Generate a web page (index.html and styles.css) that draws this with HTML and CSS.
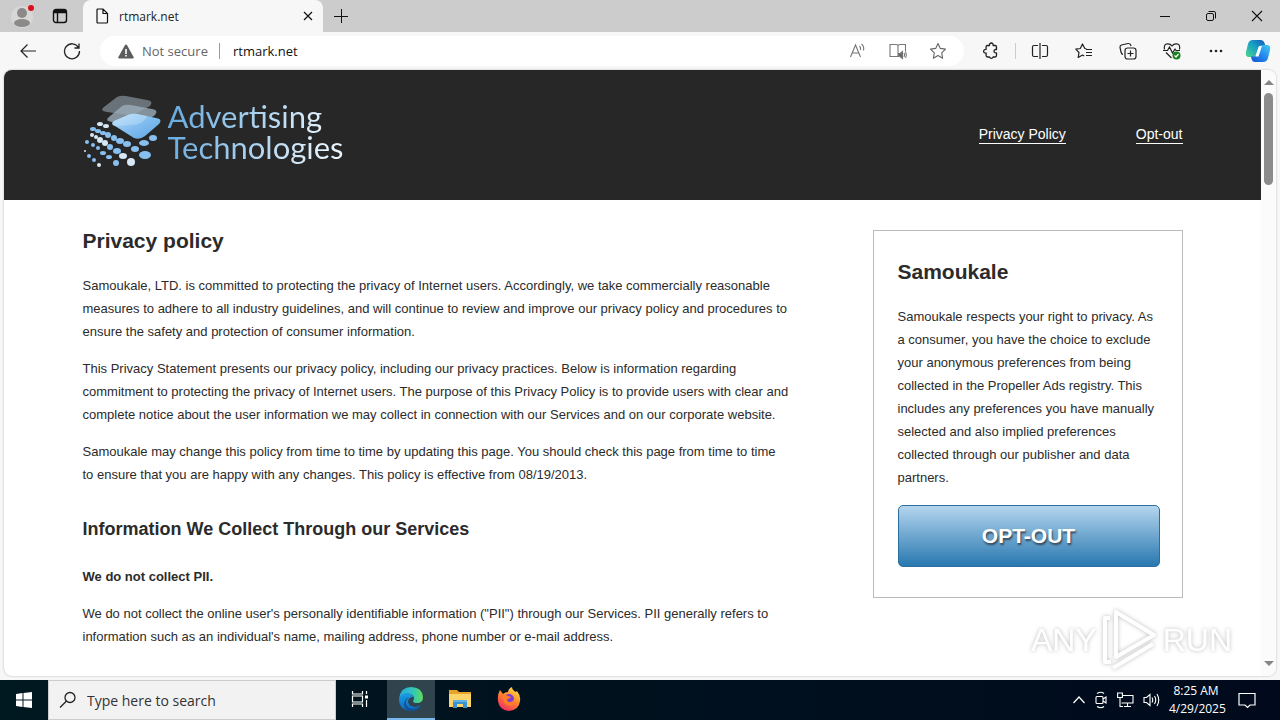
FILE: index.html
```html
<!DOCTYPE html>
<html lang="en">
<head>
    <meta charset="UTF-8"/>
    <title>rtmark.net</title>
    <meta name="viewport" content="width=device-width, initial-scale=1"/>
    <link rel="stylesheet" href="styles.css">
</head>
<body>
<div class="tabs">
    <button class="profile" aria-label="Profile">
        <svg width="24" height="24" viewBox="0 0 24 24"><circle cx="11" cy="13" r="11" fill="#d9d7d5"/><circle cx="11" cy="9" r="5" fill="#8c8a88"/><ellipse cx="11" cy="19" rx="8" ry="4" fill="#8c8a88"/><circle cx="20" cy="4" r="3" fill="#d8101c"/></svg>
    </button>
    <button class="tab-menu" aria-label="Tab actions">
        <svg width="16" height="16" viewBox="0 0 16 16" fill="none" stroke="#111" stroke-width="1.4"><rect x="1.5" y="1.5" width="13" height="13" rx="2.5"/><path d="M2 3h12M2 4.3h12" stroke-width="2"/><path d="M5.5 5v9.5"/></svg>
    </button>
    <div class="tab">
        <svg width="14" height="16" viewBox="0 0 14 16" fill="none" stroke="#111" stroke-width="1.2"><path d="M3 1h5l4.5 4.5V14q0 1-1 1H3q-1 0-1-1V2q0-1 1-1zM8 1v4.500h4.500"/></svg>
        <span class="tab-title">rtmark.net</span>
        <button aria-label="Close tab"><svg width="10" height="10" viewBox="0 0 10 10" stroke="#111" stroke-width="1.2"><path d="M1 1l8 8M9 1L1 9"/></svg></button>
    </div>
    <button class="new-tab" aria-label="New tab"><svg width="14" height="14" viewBox="0 0 14 14" stroke="#111"><path d="M7.500 0v14M0 7.500h14"/></svg></button>
    <div class="window-buttons">
        <button aria-label="Minimize"><svg width="12" height="12" viewBox="0 0 12 12" stroke="#111"><path d="M1 6.500h10"/></svg></button>
        <button aria-label="Restore"><svg width="12" height="12" viewBox="0 0 12 12" fill="none" stroke="#111"><rect x="1.500" y="3.500" width="7" height="7" rx="1.500"/><path d="M3.500 1.500H9q1.500 0 1.500 1.500v5.500"/></svg></button>
        <button aria-label="Close"><svg width="12" height="12" viewBox="0 0 12 12" stroke="#111" stroke-width="1.1"><path d="M1 1l10 10M11 1L1 11"/></svg></button>
    </div>
</div>

<div class="toolbar">
    <button aria-label="Back"><svg width="18" height="16" viewBox="0 0 18 16" fill="none" stroke="#222" stroke-width="1.2"><path d="M17 8H2M8.500 1.500L2 8l6.500 6.500"/></svg></button>
    <button class="reload" aria-label="Reload"><svg width="18" height="18" viewBox="0 0 18 18" fill="none" stroke="#222" stroke-width="1.3"><path d="M15.500 5.500A7.500 7.500 0 1 0 16.500 9M16 1.500v4.500h-4.500"/></svg></button>
    <div class="address">
        <svg width="16" height="15" viewBox="0 0 16 15"><path d="M8 .5q.7 0 1.100.8l6.500 11.600q.7 1.600-1 1.600H1.400q-1.700 0-1-1.600L6.900 1.300Q7.300.5 8 .5z" fill="#5c5c5c"/><path d="M7.200 5h1.600v5H7.200zM7.200 11h1.600v1.600H7.200z" fill="#fff"/></svg>
        <label for="url">Not secure</label>
        <input type="text" id="url" value="rtmark.net" spellcheck="false"/>
        <button aria-label="Read aloud"><svg width="18" height="18" viewBox="0 0 18 18" fill="none" stroke="#777" stroke-width="1.100"><path d="M1.500 15L6.500 3l5 12M3.300 11h6.500M10.500 4q1.500 1.500 1 4M12.500 2q3 2.500 2 6.500"/></svg></button>
        <button aria-label="Immersive reader"><svg width="18" height="18" viewBox="0 0 18 18" fill="none" stroke="#777" stroke-width="1.100"><path d="M9 14.500H1V2.500h6q2 0 2 1.500v10.500M9 4q0-1.500 2-1.500h5.500v7"/><path d="M9.500 11.500h1.500l2.500-2v7l-2.500-2H9.500z" fill="#666"/><path d="M15 11q1 2 0 4M16.500 10q1.500 3 0 6"/></svg></button>
        <button aria-label="Favorite"><svg width="18" height="18" viewBox="0 0 18 18" fill="none" stroke="#666" stroke-width="1.100" stroke-linejoin="round"><path d="M9 1.500l2.300 4.900 5.200.7-3.800 3.700.9 5.400L9 13.600l-4.600 2.600.9-5.400L1.500 7.100l5.200-.7z"/></svg></button>
    </div>
    <div class="tools">
        <button aria-label="Extensions"><svg width="18" height="18" viewBox="0 0 18 18" fill="none" stroke="#222" stroke-width="1.300" stroke-linejoin="round"><path d="M5.500 3.500h2a1.900 1.900 0 1 1 3.600 0h2q1.400 0 1.400 1.400v2.600h-.8a1.700 1.700 0 1 0 0 3.400h.8v2.700q0 1.400-1.400 1.400h-2a1.900 1.900 0 0 1-3.600 0h-2q-1.400 0-1.400-1.400V11a1.900 1.900 0 1 1 0-3.600V4.900q0-1.400 1.400-1.400z"/></svg></button>
        <span class="tools-line"></span>
        <button aria-label="Split screen"><svg width="18" height="18" viewBox="0 0 18 18" fill="none" stroke="#222" stroke-width="1.200"><path d="M7 3.500H3Q1.500 3.500 1.500 5v8q0 1.500 1.500 1.500h4M11 3.500h4q1.500 0 1.500 1.500v8q0 1.500-1.500 1.500h-4M9 1v16"/></svg></button>
        <button aria-label="Favorites"><svg width="18" height="18" viewBox="0 0 18 18" fill="none" stroke="#222" stroke-width="1.200" stroke-linejoin="round"><path d="M11.500 6.800L9.800 6.500 7.500 2 5.300 6.500l-4.500.7 3.200 3.300-.8 5 4.300-2.400 1.700 1M11 7.500h6M11 10.500h6M11 13.500h6"/></svg></button>
        <button aria-label="Collections"><svg width="18" height="18" viewBox="0 0 18 18" fill="none" stroke="#222" stroke-width="1.200"><rect x="6" y="6" width="11" height="11" rx="2.500"/><path d="M11.500 8.500v6M8.500 11.500h6M4 12.500Q2.500 12 2 10L1 5.500Q.8 3.500 2.500 3L9 1.500q2-.2 2.700 1.500l.3 1"/></svg></button>
        <button aria-label="Browser essentials"><svg width="18" height="18" viewBox="0 0 18 18" fill="none" stroke="#222" stroke-width="1.200"><path d="M1.500 7.500Q.5 2 4.500 1.800 7.500 1.700 9 4q1.500-2.300 4.500-2.200 4 .2 3 5.700M3 10.500l5.500 5.500M0 8.500h4.500L6.500 5l3 6L12 7l1 1.500h4"/><circle cx="13.500" cy="13.500" r="4" fill="#18811c" stroke="none"/><path d="M11.500 13.500l1.500 1.500 2.500-3" stroke="#fff"/></svg></button>
        <button aria-label="Settings and more"><svg width="18" height="18" viewBox="0 0 18 18" fill="#222"><circle cx="4" cy="9" r="1.300"/><circle cx="9" cy="9" r="1.300"/><circle cx="14" cy="9" r="1.300"/></svg></button>
    </div>
    <button class="copilot" aria-label="Copilot">
        <svg width="26" height="24" viewBox="0 0 26 24">
            <defs>
                <linearGradient id="cp1" x1="0" y1="1" x2="1" y2="0"><stop offset="0" stop-color="#4dd68b"/><stop offset=".55" stop-color="#169fc5"/><stop offset="1" stop-color="#1555b8"/></linearGradient>
                <linearGradient id="cp2" x1="0" y1="1" x2="1" y2="0"><stop offset="0" stop-color="#1550cf"/><stop offset=".5" stop-color="#2389ed"/><stop offset="1" stop-color="#43cdf0"/></linearGradient>
            </defs>
            <path d="M8 1h8q2.500 0 3.300 2.500L20.500 7H16q-2 0-2.700 2L11 16q-.7 2-3 2H4q-4 0-3-5l2-8q1-4 5-4z" fill="url(#cp1)"/>
            <path d="M18 23h-8q-2.500 0-3.300-2.500L6 17.500h3q2 0 2.700-2L14.500 8q.7-2 3-2h4.500q4 0 3 5l-2 8q-1 4-5 4z" fill="url(#cp2)"/>
            <path d="M14 7h3l-3.500 10.500h-3z" fill="#fff"/>
        </svg>
    </button>
</div>

<div class="viewport">
    <div class="page">
        <header class="header">
            <div class="container header-inner">
                <a class="logo" href="#">
                    <svg width="78" height="76" viewBox="0 0 78 76">
                        <defs>
                            <linearGradient id="tile" x1="0" y1="0" x2="1" y2="1"><stop offset="0" stop-color="#c2e2fa"/><stop offset=".5" stop-color="#82bdef"/><stop offset="1" stop-color="#5ba5e2"/></linearGradient>
                        </defs>
                        <path d="M34 4q4-2 9-1l21 4q7 1 3 6L54 20q-4 3-9 2l-21-3q-8-1-3-5z" fill="#697179"/>
                        <path d="M39 13q4-2 9-1l21 4q7 1 3 6L59 31q-4 3-9 2l-21-4q-8-1-3-5z" fill="#9aadb9" opacity=".8"/>
                        <path d="M45 22q4-2 9-1l19 4q7 1 3 6L62 43q-5 4-11 2L32 33q-5-2-1-5z" fill="url(#tile)"/>
                        <path d="M31 28l14-6q4-2 9-1l10 2q-3 9-17 9-10 1-16 1-4-2 0-5z" fill="#c6e3fb" opacity=".4"/>
                        <g fill="#d6e7f5">
                            <ellipse cx="17" cy="31" rx="3" ry="2"/><ellipse cx="23" cy="33" rx="3" ry="2"/><ellipse cx="9" cy="42" rx="2" ry="2"/><ellipse cx="13" cy="44" rx="2" ry="2"/><ellipse cx="17" cy="47" rx="3" ry="3"/><ellipse cx="22" cy="50" rx="3" ry="3"/><ellipse cx="40" cy="63" rx="4" ry="3"/><ellipse cx="48" cy="69" rx="4" ry="4"/><ellipse cx="16" cy="72" rx="2" ry="2"/><ellipse cx="2" cy="58" rx="1" ry="1"/>
                        </g>
                        <g fill="#86bff0">
                            <ellipse cx="10" cy="36" rx="3" ry="2"/><ellipse cx="15" cy="38" rx="3" ry="2"/><ellipse cx="20" cy="40" rx="3" ry="2"/><ellipse cx="25" cy="42" rx="3" ry="3"/><ellipse cx="31" cy="45" rx="3" ry="3"/><ellipse cx="37" cy="48" rx="4" ry="3"/><ellipse cx="44" cy="51" rx="4" ry="3"/><ellipse cx="52" cy="56" rx="4" ry="3"/><ellipse cx="61" cy="50" rx="5" ry="3"/><ellipse cx="70" cy="45" rx="4" ry="3"/><ellipse cx="62" cy="62" rx="6" ry="4"/><ellipse cx="27" cy="54" rx="3" ry="3"/><ellipse cx="34" cy="58" rx="4" ry="3"/><ellipse cx="4" cy="49" rx="2" ry="2"/><ellipse cx="10" cy="52" rx="2" ry="2"/><ellipse cx="15" cy="55" rx="2" ry="2"/><ellipse cx="20" cy="60" rx="3" ry="2"/><ellipse cx="26" cy="64" rx="3" ry="2"/><ellipse cx="6" cy="63" rx="2" ry="2"/><ellipse cx="11" cy="67" rx="2" ry="2"/><ellipse cx="33" cy="70" rx="3" ry="3"/>
                        </g>
                    </svg>
                    <span class="logo-text">Advertising<br/>Technologies</span>
                </a>
                <nav class="menu">
                    <a href="#">Privacy Policy</a>
                    <a href="#">Opt-out</a>
                </nav>
            </div>
        </header>

        <div class="container content">
            <main class="main">
                <h1>Privacy policy</h1>
                <p>Samoukale, LTD. is committed to protecting the privacy of Internet users. Accordingly, we take commercially reasonable measures to adhere to all industry guidelines, and will continue to review and improve our privacy policy and procedures to ensure the safety and protection of consumer information.</p>
                <p>This Privacy Statement presents our privacy policy, including our privacy practices. Below is information regarding commitment to protecting the privacy of Internet users. The purpose of this Privacy Policy is to provide users with clear and complete notice about the user information we may collect in connection with our Services and on our corporate website.</p>
                <p>Samoukale may change this policy from time to time by updating this page. You should check this page from time to time<br/>to ensure that you are happy with any changes. This policy is effective from 08/19/2013.</p>
                <h2>Information We Collect Through our Services</h2>
                <p><b>We do not collect PII.</b></p>
                <p>We do not collect the online user's personally identifiable information ("PII") through our Services. PII generally refers to information such as an individual's name, mailing address, phone number or e-mail address.</p>
            </main>
            <aside class="sidebar">
                <h1>Samoukale</h1>
                <p>Samoukale respects your right to privacy. As a consumer, you have the choice to exclude your anonymous preferences from being collected in the Propeller Ads registry. This includes any preferences you have manually selected and also implied preferences collected through our publisher and data partners.</p>
                <button class="opt-out">OPT-OUT</button>
            </aside>
        </div>
    </div>
    <div class="scrollbar">
        <span class="arrow-up"></span>
        <span class="thumb"></span>
        <span class="arrow-down"></span>
    </div>
    <div class="watermark">
        <span>ANY</span>
        <svg width="58" height="64" viewBox="0 0 58 64" fill="none" stroke="#fff" stroke-width="4" stroke-linejoin="round"><path d="M15 4l38 23-38 22zM9 10H4v44h6M12 60l40-24"/></svg>
        <span>RUN</span>
    </div>
</div>

<div class="taskbar">
    <button class="start" aria-label="Start"><svg width="16" height="16" viewBox="0 0 16 16" fill="#fff"><path d="M0 2l6.500-1v6.500H0zM7.500 1L16 0v7.500H7.500zM0 8.500h6.500V15L0 14zM7.500 8.500H16V16l-8.500-1z"/></svg></button>
    <div class="search">
        <label for="search"><svg width="18" height="18" viewBox="0 0 18 18" fill="none" stroke="#222" stroke-width="1.300"><circle cx="11" cy="6.500" r="5"/><path d="M7.500 10L1 16.500"/></svg></label>
        <input type="text" id="search" aria-label="Search" placeholder="Type here to search"/>
    </div>
    <button class="app task-view" aria-label="Task view"><svg width="18" height="18" viewBox="0 0 18 18" fill="none" stroke="#fff" stroke-width="1.200"><path d="M1.500 1v3h10V1M1.500 17v-3h10v3M1.500 6h10v6h-10zM15.500 1v3M15.500 10v7"/><path d="M14 5.500h3v3h-3z" fill="#fff" stroke="none"/></svg></button>
    <button class="app active" aria-label="Edge">
        <svg width="24" height="24" viewBox="0 0 24 24">
            <defs>
                <linearGradient id="edge1" x1="0" y1="0" x2="1" y2="0"><stop offset="0" stop-color="#29a9e0"/><stop offset=".6" stop-color="#32c7b6"/><stop offset="1" stop-color="#63dc5a"/></linearGradient>
                <linearGradient id="edge2" x1="0" y1="0" x2="0" y2="1"><stop offset="0" stop-color="#1b9de2"/><stop offset="1" stop-color="#0d6abf"/></linearGradient>
            </defs>
            <path d="M0 11Q2 0 12 0q11 0 12 10 0 6-6 6-4 0-4-2 1-1 1-3-1-4-5-4-5 0-10 4z" fill="url(#edge1)"/>
            <path d="M0 12q2-6 8-6 5 0 6 4-4 0-5 4 0 5 6 6 4 0 7-2-4 6-10 6Q0 23 0 12z" fill="url(#edge2)"/>
            <path d="M10 10q-5 4-2 9 5 6 14-1-4 6-10 6-6 0-7-6 0-6 5-8z" fill="#12529c"/>
        </svg>
    </button>
    <button class="app" aria-label="File Explorer"><svg width="22" height="20" viewBox="0 0 22 20"><path d="M0 1h8l2 2h12v15H0z" fill="#e8a32b"/><path d="M0 5h22v13H0z" fill="#fbd569"/><path d="M4 11h14v8h-4v-4H8v4H4z" fill="#3a93d0"/><path d="M4 11h14v2H4z" fill="#62b2e4"/></svg></button>
    <button class="app" aria-label="Firefox">
        <svg width="24" height="24" viewBox="0 0 24 24">
            <defs>
                <linearGradient id="fox" x1=".8" y1="0" x2=".2" y2="1"><stop offset="0" stop-color="#ffe14a"/><stop offset=".45" stop-color="#ff8a2a"/><stop offset="1" stop-color="#f02466"/></linearGradient>
            </defs>
            <path d="M3 3l3 4q2-2 5-2 0-3 4-5 0 3 4 5l1-1q4 5 3 10-1 9-11 10Q2 23 1 14q-1-6 2-11z" fill="url(#fox)"/>
            <circle cx="12" cy="12" r="5" fill="#7a3fd0"/>
            <path d="M5 8q3-1 6 1l3 1q-1 2-4 2 0 3 3 3 3 0 4-3 1 7-5 7Q6 18 5 8z" fill="#ff7c2c"/>
        </svg>
    </button>
    <div class="tray">
        <button aria-label="Show hidden icons"><svg width="12" height="16" viewBox="0 0 12 16" fill="none" stroke="#fff" stroke-width="1.200"><path d="M.5 11L6 5l5.500 6"/></svg></button>
        <button aria-label="Meet now"><svg width="14" height="18" viewBox="0 0 14 18" fill="none" stroke="#fff" stroke-width="1.100"><rect x="2" y="5.500" width="7" height="7" rx="1"/><path d="M9 8l3-2v6l-3-2M3 2.500q4-2.500 7 0M3 15.500q4 2.500 7 0"/></svg></button>
        <button aria-label="Network"><svg width="17" height="16" viewBox="0 0 17 16" fill="none" stroke="#fff" stroke-width="1.100"><path d="M6 3.500h10v7.500H4.500M10.500 11v3M7 14.500h7M3 6v8.500h3"/><path d="M.6 1h4.800v4.500H.6z"/></svg></button>
        <button aria-label="Volume"><svg width="17" height="16" viewBox="0 0 17 16" fill="none" stroke="#fff" stroke-width="1.100"><path d="M1 5.500h2.500L7 2.500v11l-3.500-3H1zM9 5.500q1.500 2.500 0 5M11.500 4q2.500 4 0 8M14 2q3.500 6 0 12"/></svg></button>
        <div class="clock">8:25 AM<br/>4/29/2025</div>
        <button class="notifications" aria-label="Notifications"><svg width="18" height="18" viewBox="0 0 18 18" fill="none" stroke="#fff" stroke-width="1.200"><path d="M1 2.500h16v11.500h-5l-2.500 2.500L7 14H1z"/></svg></button>
    </div>
</div>
</body>
</html>
```
FILE: styles.css
```css
* {
    box-sizing: border-box;
}

body {
    margin: 0;
    height: 100vh;
    display: flex;
    flex-direction: column;
    overflow: hidden;
    background: #f7f7f7;
    font-family: "Open Sans", "Noto Sans", sans-serif;
    font-size: 14px;
    color: #222;
}

button {
    display: flex;
    align-items: center;
    justify-content: center;
    padding: 0;
    border: none;
    background: none;
    font-family: inherit;
    flex-shrink: 0;
    cursor: pointer;
}

svg {
    display: block;
    flex-shrink: 0;
}

/* Browser */
.tabs {
    display: flex;
    height: 32px;
    flex-shrink: 0;
    background: #ccc;
}

.profile {
    width: 46px;
}

.tab-menu {
    width: 28px;
}

.tab {
    display: flex;
    align-items: center;
    gap: 10px;
    width: 240px;
    margin-left: 9px;
    padding: 0 10px 0 12px;
    background: #f7f7f7;
    border-radius: 8px 8px 0 0;
    font-size: 12px;
}

.tab-title {
    flex: 1;
}

.new-tab {
    width: 36px;
}

.window-buttons {
    display: flex;
    margin-left: auto;
}

.window-buttons button {
    width: 46px;
}

.toolbar {
    display: flex;
    align-items: center;
    height: 38px;
    flex-shrink: 0;
    padding: 0 9px 0 19px;
}

.reload {
    margin-left: 26px;
}

.address {
    display: flex;
    align-items: center;
    flex: 1;
    height: 30px;
    margin-left: 19px;
    padding: 0 17px 0 18px;
    background: #fff;
    border-radius: 15px;
    gap: 22px;
    font-size: 13px;
}

.address label {
    margin-left: -14px;
    padding-right: 11px;
    border-right: 1px solid #999;
    line-height: 16px;
    color: #666;
}

.address input {
    flex: 1;
    min-width: 0;
    margin-left: -9px;
    padding: 0;
    border: none;
    outline: none;
    font: inherit;
    color: #111;
}

.tools {
    display: flex;
    align-items: center;
    gap: 26px;
    margin-left: 18px;
}

.tools-line {
    width: 1px;
    height: 16px;
    margin: 0 -11px;
    background: #ccc;
}

.copilot {
    margin-left: 20px;
}

.viewport {
    position: relative;
    display: flex;
    flex: 1;
    min-height: 0;
    margin: 0 4px 4px;
    background: #fff;
    border-radius: 8px;
    overflow: hidden;
    box-shadow: 0 0 2px #aaa;
}

.scrollbar {
    display: flex;
    flex-direction: column;
    align-items: center;
    width: 15px;
    padding: 10px 0;
    background: #fbfbfb;
}

.arrow-up,
.arrow-down {
    border: 5px solid transparent;
}

.arrow-up {
    border-top: none;
    border-bottom-color: #858585;
}

.arrow-down {
    margin-top: auto;
    border-bottom: none;
    border-top-color: #858585;
}

.thumb {
    width: 9px;
    height: 92px;
    margin-top: 8px;
    background: #8b8b8b;
    border-radius: 5px;
}

/* Page */
.page {
    flex: 1;
    overflow: hidden;
    font-family: "Liberation Sans", Arial, sans-serif;
    font-size: 13px;
    line-height: 23px;
    color: #2b2b2b;
}

.container {
    max-width: 1100px;
    margin: 0 auto;
}

.header {
    background: #272727;
}

.header-inner {
    display: flex;
    align-items: center;
    justify-content: space-between;
    height: 130px;
}

.logo {
    display: flex;
    gap: 7px;
    margin-bottom: 8px;
    text-decoration: none;
}

.logo-text {
    padding-top: 8px;
    font-family: Lato, sans-serif;
    font-size: 31px;
    line-height: 31px;
    color: transparent;
    background: linear-gradient(100deg, #62a8de, #e8f4fd 90%);
    background-clip: text;
    -webkit-background-clip: text;
}

.menu {
    display: flex;
    gap: 70px;
}

.menu a {
    font-size: 14px;
    line-height: 17px;
    color: #fff;
    text-decoration: none;
    border-bottom: 1px solid #fff;
}

.content {
    display: flex;
    align-items: flex-start;
    gap: 80px;
    padding-top: 30px;
}

.main {
    flex: 1;
}

h1 {
    margin: 0 0 22px;
    font-size: 21px;
    line-height: 22px;
}

h2 {
    margin: 31px 0 24px;
    font-size: 18px;
    line-height: 24px;
}

p {
    margin: 0 0 14px;
}

.sidebar {
    width: 310px;
    padding: 30px 22px 30px 24px;
    border: 1px solid #bbb;
}

.opt-out {
    width: 100%;
    height: 62px;
    margin-top: 16px;
    border: 1px solid #2b6f9f;
    border-radius: 5px;
    background: linear-gradient(#b5d5ee, #2878b0);
    font-size: 21px;
    font-weight: 700;
    color: #fff;
    text-shadow: 1px 2px 2px #345;
}

.watermark {
    position: absolute;
    right: 44px;
    bottom: 4px;
    display: flex;
    align-items: center;
    gap: 4px;
    font-family: "Liberation Sans Narrow", "Liberation Sans", sans-serif;
    font-size: 32px;
    color: #fff;
    filter: drop-shadow(0 0 2px #bbb);
    pointer-events: none;
}

/* Taskbar */
.taskbar {
    display: flex;
    height: 40px;
    flex-shrink: 0;
    background: linear-gradient(90deg, #001820, #000a1c);
}

.start {
    width: 48px;
}

.search {
    display: flex;
    align-items: center;
    gap: 10px;
    width: 288px;
    padding: 0 10px;
    background: #f2f2f2;
    border: 1px solid #ccc;
}

.search input {
    flex: 1;
    min-width: 0;
    padding: 0;
    border: none;
    outline: none;
    background: none;
    font: inherit;
}

.search input::placeholder {
    color: #333;
}

.app {
    width: 48px;
    margin-right: 1px;
    border-bottom: 2px solid transparent;
}

.task-view {
    margin-right: 3px;
}

.app.active {
    background: #2f444c;
    border-bottom-color: #76b9ed;
}

.tray {
    display: flex;
    align-items: center;
    gap: 9px;
    margin-left: auto;
    color: #fff;
}

.clock {
    width: 54px;
    font-size: 12px;
    line-height: 18px;
    text-align: center;
    white-space: nowrap;
}

.notifications {
    margin: 0 24px 0 6px;
}
```
